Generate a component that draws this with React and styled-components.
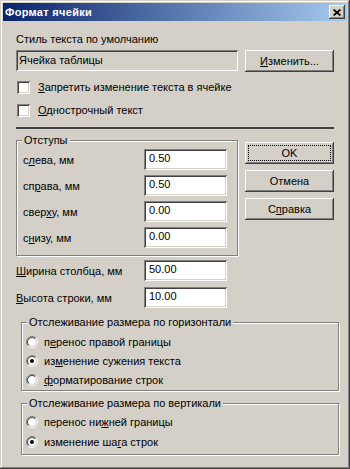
import React from 'react';
import styled, { css, createGlobalStyle } from 'styled-components';

const GlobalStyle = createGlobalStyle`
  html, body {
    margin: 0;
    padding: 0;
    background: #d4d0c8;
  }
`

const raised = css`
  box-shadow: inset -1px -1px #404040, inset 1px 1px #fff,
    inset -2px -2px #808080, inset 2px 2px #d4d0c8;
`

const sunken = css`
  box-shadow: inset 1px 1px #808080, inset -1px -1px #fff,
    inset 2px 2px #404040, inset -2px -2px #d4d0c8;
`

const Window = styled.div`
  width: 350px;
  height: 469px;
  box-sizing: border-box;
  padding: 3px;
  background: #d4d0c8;
  box-shadow: inset -1px -1px #404040, inset 1px 1px #d4d0c8,
    inset -2px -2px #808080, inset 2px 2px #fff;
  display: flex;
  flex-direction: column;
  font-family: "Liberation Sans", Tahoma, sans-serif;
  font-size: 11px;
  color: #000;
`

const TitleBar = styled.div`
  height: 18px;
  display: flex;
  align-items: center;
  justify-content: space-between;
  padding: 0 2px;
  background: linear-gradient(to right, #0a246a, #a6caf0);
  color: #fff;
  font-weight: bold;
  letter-spacing: 0.3px;
`

const CloseButton = styled.div`
  width: 16px;
  height: 14px;
  display: flex;
  align-items: center;
  justify-content: center;
  background: #d4d0c8;
  ${raised};
`

const Body = styled.div`
  flex: 1;
  display: flex;
  flex-direction: column;
  padding: 0 13px;
`

const Caption = styled.div`
  margin-top: 12px;
  line-height: 13px;
`

const SplitRow = styled.div`
  display: flex;
  justify-content: space-between;
  align-items: flex-start;
  margin-top: ${p => p.$top}px;
`

const ReadOnlyBox = styled.div`
  width: 222px;
  height: 21px;
  box-sizing: border-box;
  padding: 0 3px;
  line-height: 20px;
  background: #d4d0c8;
  ${sunken};
`

const Button = styled.div`
  width: 89px;
  height: 22px;
  box-sizing: border-box;
  display: flex;
  align-items: center;
  justify-content: center;
  background: #d4d0c8;
  ${raised};
  ${p => p.$focused && css`
    outline: 1px dotted #000;
    outline-offset: -4px;
  `}
`

const ButtonColumn = styled.div`
  display: flex;
  flex-direction: column;
  gap: 6px;
  margin-top: 2px;
`

const CheckRow = styled.div`
  display: flex;
  align-items: center;
  gap: 8px;
  margin-top: ${p => p.$top}px;
  margin-left: 1px;
  line-height: 13px;
`

const CheckBox = styled.span`
  width: 13px;
  height: 13px;
  flex: none;
  background: #fff;
  ${sunken};
`

const Separator = styled.div`
  height: 2px;
  margin-top: 10px;
  background: #404040;
`

const Group = styled.div`
  position: relative;
  box-sizing: border-box;
  border: 1px solid #808080;
  box-shadow: inset 1px 1px #fff, 1px 1px #fff;
  ${p => p.$width && css`width: ${p.$width}px;`}
  margin-top: ${p => p.$top || 0}px;
  margin-left: ${p => p.$shift || 0}px;
  margin-right: ${p => -(p.$shift || 0)}px;
  padding: ${p => p.$pad};
`

const Legend = styled.span`
  position: absolute;
  top: -7px;
  left: 5px;
  padding: 0 2px;
  line-height: 13px;
  background: #d4d0c8;
`

const FieldGrid = styled.div`
  display: grid;
  grid-template-columns: ${p => p.$label}px 83px;
  row-gap: ${p => p.$gap}px;
  align-items: center;
  margin-top: ${p => p.$top || 0}px;
`

const Input = styled.div`
  height: 21px;
  box-sizing: border-box;
  padding: 0 5px;
  line-height: 18px;
  background: #fff;
  ${sunken};
`

const RadioRow = styled.div`
  display: flex;
  align-items: center;
  gap: 6px;
  height: ${p => p.$h}px;
`

const Key = styled.u`
  text-underline-offset: 1px;
`

const Radio = ({ checked }) => {
  const arc = (r, tl) => {
    const d = r * 0.7071;
    const a = `${6 - d} ${6 + d}`;
    const b = `${6 + d} ${6 - d}`;
    return tl ? `M${a} A${r} ${r} 0 0 1 ${b}` : `M${b} A${r} ${r} 0 0 1 ${a}`;
  };
  return (
    <svg width="12" height="12" viewBox="0 0 12 12" style={{ flex: 'none' }}>
      <circle cx="6" cy="6" r="4.5" fill="#fff" />
      <path d={arc(5.5, true)} stroke="#808080" fill="none" />
      <path d={arc(5.5, false)} stroke="#fff" fill="none" />
      <path d={arc(4.5, true)} stroke="#404040" fill="none" />
      <path d={arc(4.5, false)} stroke="#d4d0c8" fill="none" />
      {checked && <circle cx="6" cy="6" r="2" fill="#000" />}
    </svg>
  );
};

const CloseGlyph = () => (
  <svg width="8" height="7" viewBox="0 0 8 7">
    <path d="M0.6 0.5 L7.4 6.5 M7.4 0.5 L0.6 6.5" stroke="#000" strokeWidth="1.7" />
  </svg>
);

const margins = [
  [<>с<Key>л</Key>ева, мм</>, '0.50'],
  [<>сп<Key>р</Key>ава, мм</>, '0.50'],
  [<>свер<Key>х</Key>у, мм</>, '0.00'],
  [<>с<Key>н</Key>изу, мм</>, '0.00'],
];

export default function App() {
  return (
    <>
      <GlobalStyle />
      <Window>
        <TitleBar>
          <span>Формат ячейки</span>
          <CloseButton><CloseGlyph /></CloseButton>
        </TitleBar>
        <Body>
          <Caption>Стиль текста по умолчанию</Caption>
          <SplitRow $top={4}>
            <ReadOnlyBox>Ячейка таблицы</ReadOnlyBox>
            <Button><span><Key>И</Key>зменить...</span></Button>
          </SplitRow>
          <CheckRow $top={9}>
            <CheckBox />
            <span><Key>З</Key>апретить изменение текста в ячейке</span>
          </CheckRow>
          <CheckRow $top={10}>
            <CheckBox />
            <span><Key>О</Key>днострочный текст</span>
          </CheckRow>
          <Separator />
          <SplitRow $top={11}>
            <Group $width={222} $pad="8px 10px 7px 6px">
              <Legend>Отступы</Legend>
              <FieldGrid $label={121} $gap={5}>
                {margins.map(([label, value], i) => (
                  <React.Fragment key={i}>
                    <span>{label}</span>
                    <Input>{value}</Input>
                  </React.Fragment>
                ))}
              </FieldGrid>
            </Group>
            <ButtonColumn>
              <Button $focused>OK</Button>
              <Button>Отмена</Button>
              <Button><span>С<Key>п</Key>равка</span></Button>
            </ButtonColumn>
          </SplitRow>
          <FieldGrid $label={128} $gap={6} $top={4}>
            <span><Key>Ш</Key>ирина столбца, мм</span>
            <Input>50.00</Input>
            <span><Key>В</Key>ысота строки, мм</span>
            <Input>10.00</Input>
          </FieldGrid>
          <Group $top={14} $shift={5} $pad="9px 4px 1px 4px">
            <Legend>Отслеживание размера по горизонтали</Legend>
            <RadioRow $h={19}>
              <Radio />
              <span>п<Key>е</Key>ренос правой границы</span>
            </RadioRow>
            <RadioRow $h={19}>
              <Radio checked />
              <span>из<Key>м</Key>енение сужения текста</span>
            </RadioRow>
            <RadioRow $h={19}>
              <Radio />
              <span><Key>ф</Key>орматирование строк</span>
            </RadioRow>
          </Group>
          <Group $top={12} $shift={5} $pad="8px 4px 2px 4px">
            <Legend>Отслеживание размера по вертикали</Legend>
            <RadioRow $h={20}>
              <Radio />
              <span>перенос ни<Key>ж</Key>ней границы</span>
            </RadioRow>
            <RadioRow $h={20}>
              <Radio checked />
              <span>изменение ша<Key>г</Key>а строк</span>
            </RadioRow>
          </Group>
        </Body>
      </Window>
    </>
  );
}
